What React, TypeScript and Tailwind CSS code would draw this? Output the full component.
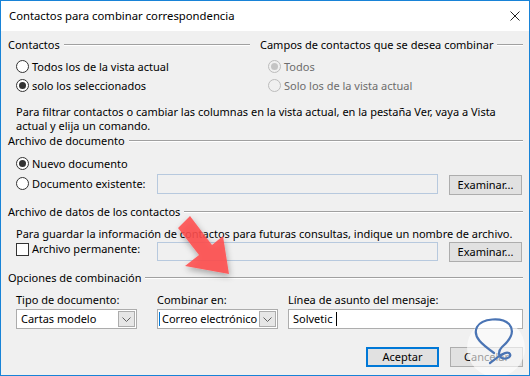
import React from "react";

function Radio({ checked, disabled }: { checked?: boolean; disabled?: boolean }) {
  return (
    <span
      className={
        disabled
          ? "w-[13px] h-[13px] rounded-full border border-[#bcbcbc] bg-[#f0f0f0] flex items-center justify-center shrink-0"
          : "w-[13px] h-[13px] rounded-full border border-[#333333] bg-white flex items-center justify-center shrink-0"
      }
    >
      {checked && (
        <span className={disabled ? "w-[7px] h-[7px] rounded-full bg-[#c4c4c4]" : "w-[7px] h-[7px] rounded-full bg-[#333333]"} />
      )}
    </span>
  );
}

function GroupHeader({ title }: { title: string }) {
  return (
    <div className="flex items-center h-[16px]">
      <span className="whitespace-nowrap">{title}</span>
      <div className="flex-1 ml-[4px] h-[2px] border-t border-t-[#a0a0a0] border-b border-b-white" />
    </div>
  );
}

function Button({ label, focused }: { label: string; focused?: boolean }) {
  return (
    <div
      className={
        focused
          ? "w-[73px] h-[20px] border-2 border-[#0078d7] bg-[#e1e1e1] flex items-center justify-center"
          : "w-[73px] h-[20px] border border-[#adadad] bg-[#e1e1e1] flex items-center justify-center"
      }
    >
      {label}
    </div>
  );
}

function Chevron() {
  return (
    <svg width="9" height="5" viewBox="0 0 9 5">
      <polyline points="0.5,0.5 4.5,4.5 8.5,0.5" fill="none" stroke="#606060" strokeWidth="1" />
    </svg>
  );
}

function Select({ value, focused }: { value: string; focused?: boolean }) {
  return (
    <div className="relative h-[20px] border border-[#acacac] bg-white flex items-center pl-[4px]">
      {focused && <span className="absolute left-[1px] top-[2px] bottom-[2px] w-px bg-[#0078d7]" />}
      <span className="flex-1 whitespace-nowrap overflow-hidden">{value}</span>
      <span className="w-[17px] h-[16px] mr-px border border-[#acacac] bg-[#e6e6e6] flex items-center justify-center shrink-0">
        <Chevron />
      </span>
    </div>
  );
}

export default function App() {
  return (
    <div className="relative w-[530px] h-[376px] overflow-hidden border border-[#1883d7] bg-[#f0f0f0] text-[11px] leading-[16px] text-black font-['Noto_Sans','DejaVu_Sans',sans-serif]">
      {/* title bar */}
      <div className="h-[30px] bg-white flex items-center pl-[8px] pr-[9px]">
        <span className="flex-1 text-[11.3px]">Contactos para combinar correspondencia</span>
        <svg width="10" height="10" viewBox="0 0 10 10">
          <path d="M0.5 0.5 L9.5 9.5 M9.5 0.5 L0.5 9.5" stroke="#222" strokeWidth="1" />
        </svg>
      </div>

      <div className="pl-[7px] pr-[6px]">
        {/* contactos / campos */}
        <div className="flex pt-[6px]">
          <div className="w-[242px]">
            <GroupHeader title="Contactos" />
            <div className="pl-[8px] mt-[4px]">
              <div className="h-[19px] flex items-center gap-[3px]">
                <Radio />
                <span>Todos los de la vista actual</span>
              </div>
              <div className="h-[19px] flex items-center gap-[3px]">
                <Radio checked />
                <span>solo los seleccionados</span>
              </div>
            </div>
          </div>
          <div className="flex-1 ml-[10px]">
            <GroupHeader title="Campos de contactos que se desea combinar" />
            <div className="pl-[8px] mt-[4px] text-[#6d6d6d]">
              <div className="h-[19px] flex items-center gap-[3px]">
                <Radio checked disabled />
                <span>Todos</span>
              </div>
              <div className="h-[19px] flex items-center gap-[3px]">
                <Radio disabled />
                <span>Solo los de la vista actual</span>
              </div>
            </div>
          </div>
        </div>

        <p className="pl-[8px] mt-[10px] leading-[14px] whitespace-nowrap">
          Para filtrar contactos o cambiar las columnas en la vista actual, en la pestaña Ver, vaya a Vista
          <br />
          actual y elija un comando.
        </p>

        {/* archivo de documento */}
        <GroupHeader title="Archivo de documento" />
        <div className="pl-[8px]">
          <div className="h-[19px] mt-[5px] flex items-center gap-[3px]">
            <Radio checked />
            <span>Nuevo documento</span>
          </div>
          <div className="flex items-start mt-px">
            <div className="w-[141px] h-[19px] flex items-center gap-[3px]">
              <Radio />
              <span>Documento existente:</span>
            </div>
            <div className="w-[281px] h-[20px] border border-[#b7c9de] bg-[#f0f0f0]" />
            <div className="ml-[11px] mt-px">
              <Button label="Examinar..." />
            </div>
          </div>
        </div>

        {/* archivo de datos */}
        <div className="mt-[9px]">
          <GroupHeader title="Archivo de datos de los contactos" />
        </div>
        <div className="pl-[8px]">
          <p className="mt-[7px] leading-[13px] whitespace-nowrap">
            Para guardar la información de contactos para futuras consultas, indique un nombre de archivo.
          </p>
          <div className="flex items-start mt-[2px]">
            <div className="w-[141px] h-[14px] flex items-center gap-[3px]">
              <span className="w-[13px] h-[13px] border border-[#333333] bg-white shrink-0" />
              <span>Archivo permanente:</span>
            </div>
            <div className="w-[281px] h-[19px] border border-[#b7c9de] bg-[#f0f0f0]" />
            <div className="ml-[11px]">
              <Button label="Examinar..." />
            </div>
          </div>
        </div>

        {/* opciones */}
        <div className="mt-[8px]">
          <GroupHeader title="Opciones de combinación" />
        </div>
        <div className="pl-[8px] flex mt-[6px]">
          <div className="w-[121px]">
            <div className="h-[16px]">Tipo de documento:</div>
            <div className="mt-px">
              <Select value="Cartas modelo" />
            </div>
          </div>
          <div className="w-[121px] ml-[20px]">
            <div className="h-[16px]">Combinar en:</div>
            <div className="mt-px">
              <Select value="Correo electrónico" focused />
            </div>
          </div>
          <div className="flex-1 ml-[10px]">
            <div className="h-[16px]">Línea de asunto del mensaje:</div>
            <div className="mt-px h-[20px] border border-[#adadad] bg-white flex items-center pl-[4px]">
              <span>Solvetic</span>
              <span className="ml-[4px] w-px h-[14px] bg-black" />
            </div>
          </div>
        </div>

        <div className="flex justify-end gap-[11px] mt-[18px]">
          <Button label="Aceptar" focused />
          <Button label="Cancelar" />
        </div>
      </div>

      {/* annotation arrow */}
      <svg className="absolute left-0 top-0 pointer-events-none" width="530" height="376" viewBox="0 0 530 376">
        <defs>
          <filter id="sh" x="-50%" y="-50%" width="200%" height="200%">
            <feDropShadow dx="1" dy="3" stdDeviation="3" floodColor="#000" floodOpacity="0.35" />
          </filter>
        </defs>
        <polygon
          points="177,227 189,215 211,244 222,235 228,273 184,265 198,254"
          fill="#ff4f4f"
          fillOpacity="0.88"
          filter="url(#sh)"
        />
        {/* watermark */}
        <circle cx="495" cy="347" r="29" fill="#ffffff" fillOpacity="0.6" />
        <path
          d="M493 352 C 482 344, 471 336, 476 326 C 481 317, 501 316, 508 323 C 515 331, 508 340, 501 346 C 497 350, 497 355, 501 357 C 506 359, 512 355, 508 352 C 503 350, 496 357, 489 362"
          fill="none"
          stroke="#4a74b4"
          strokeWidth="2.2"
          strokeLinecap="round"
        />
      </svg>
    </div>
  );
}
